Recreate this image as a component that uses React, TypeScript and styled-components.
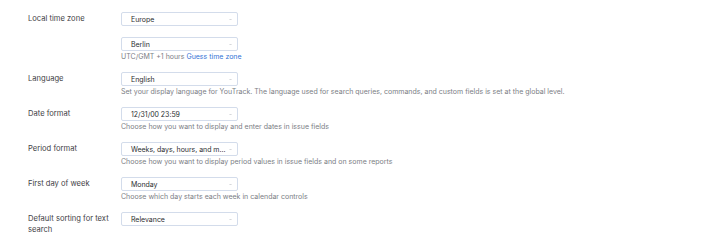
import React from 'react'
import styled, { createGlobalStyle } from 'styled-components'

const GlobalStyle = createGlobalStyle`
  html, body {
    margin: 0;
    padding: 0;
    background: #ffffff;
  }
  body {
    font-family: Inter, "Noto Sans", sans-serif;
    -webkit-font-smoothing: antialiased;
  }
`

const Page = styled.div`
  width: 706px;
  height: 242px;
  box-sizing: border-box;
  padding: 12px 0 0 28px;
  display: flex;
  flex-direction: column;
  gap: 11px;
`

const Row = styled.div`
  display: grid;
  grid-template-columns: 93px 1fr;
  align-items: start;
`

const Label = styled.div`
  font-size: 7.6px;
  line-height: 11px;
  color: #3f4246;
  padding-top: 1px;
  width: 82px;
`

const Field = styled.div`
  display: flex;
  flex-direction: column;
  gap: 11px;
`

const Control = styled.div`
  display: flex;
  flex-direction: column;
  gap: 1px;
`

const SelectBox = styled.div`
  box-sizing: border-box;
  width: 117px;
  height: 14px;
  border: 1px solid #d3dceb;
  border-radius: 2px;
  display: flex;
  align-items: center;
  justify-content: space-between;
  padding: 0 4px 0 9px;
  font-size: 7px;
  letter-spacing: -0.03px;
  color: #2b2d30;
  background: #ffffff;
`

const Value = styled.span`
  white-space: nowrap;
`

const Chevron = styled.svg`
  width: 5px;
  height: 5px;
  flex: none;
  margin-left: 1px;
`

const Hint = styled.div`
  font-size: 7px;
  line-height: 9px;
  color: #7b7e85;
  white-space: nowrap;
`

const Link = styled.a`
  color: #3574d6;
  text-decoration: none;
`

const Select: React.FC<{ value: string }> = ({ value }) => (
  <SelectBox>
    <Value>{value}</Value>
    <Chevron viewBox="0 0 10 10">
      <path d="M3 4 L5 6 L7 4" fill="none" stroke="#a9adb4" strokeWidth="1.1" />
    </Chevron>
  </SelectBox>
)

const settings = [
  { label: 'Language', value: 'English', hint: 'Set your display language for YouTrack. The language used for search queries, commands, and custom fields is set at the global level.' },
  { label: 'Date format', value: '12/31/00 23:59', hint: 'Choose how you want to display and enter dates in issue fields' },
  { label: 'Period format', value: 'Weeks, days, hours, and m...', hint: 'Choose how you want to display period values in issue fields and on some reports' },
  { label: 'First day of week', value: 'Monday', hint: 'Choose which day starts each week in calendar controls' }
]

export default function App() {
  return (
    <>
      <GlobalStyle />
      <Page>
        <Row>
          <Label>Local time zone</Label>
          <Field>
            <Select value="Europe" />
            <Control>
              <Select value="Berlin" />
              <Hint>
                UTC/GMT +1 hours <Link href="#">Guess time zone</Link>
              </Hint>
            </Control>
          </Field>
        </Row>
        {settings.map((s) => (
          <Row key={s.label}>
            <Label>{s.label}</Label>
            <Control>
              <Select value={s.value} />
              <Hint>{s.hint}</Hint>
            </Control>
          </Row>
        ))}
        <Row>
          <Label>Default sorting for text search</Label>
          <Control>
            <Select value="Relevance" />
          </Control>
        </Row>
      </Page>
    </>
  )
}
